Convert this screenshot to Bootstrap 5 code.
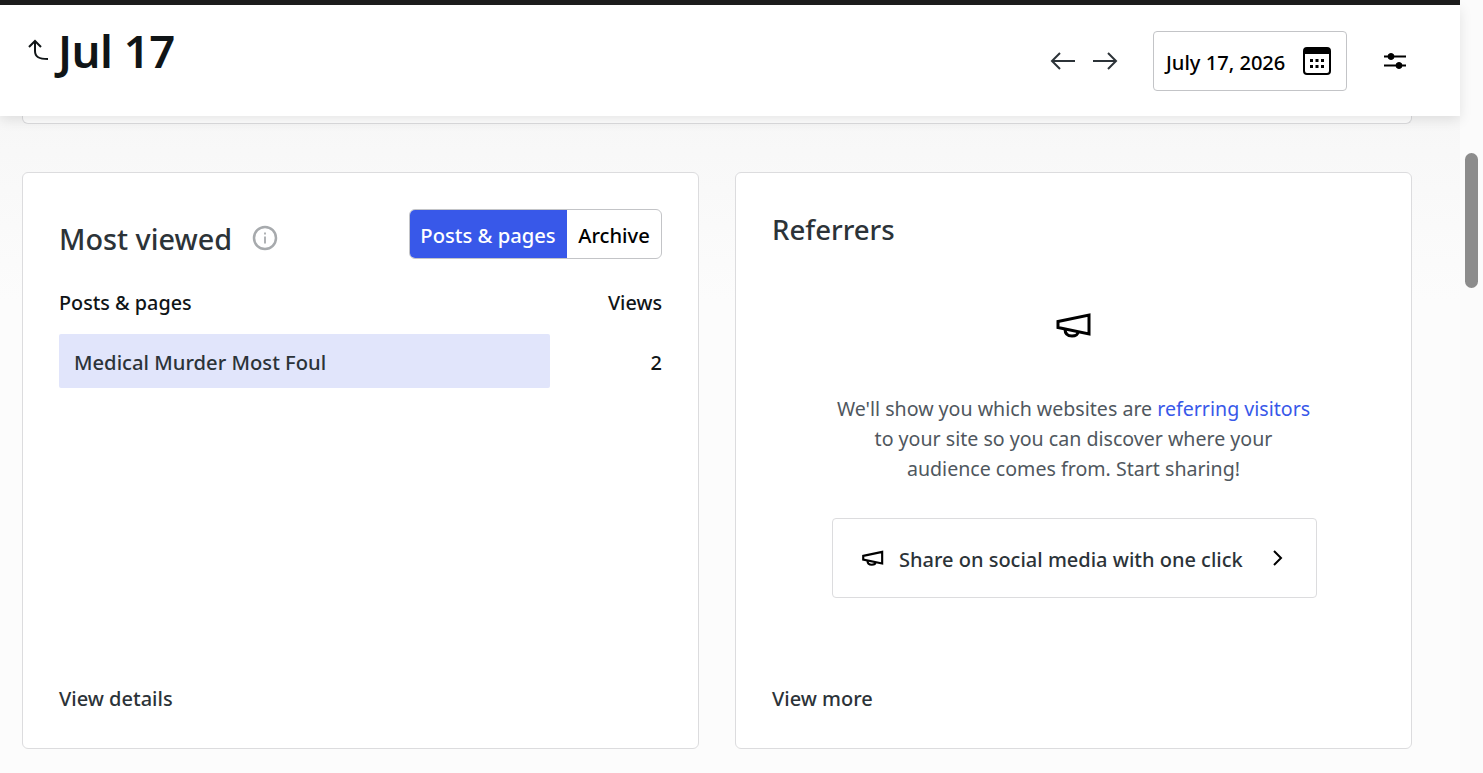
<!DOCTYPE html>
<html lang="en">

<head>
    <meta charset="UTF-8">
    <meta name="viewport" content="width=device-width, initial-scale=1.0">
    <title>Stats</title>
    <link href="https://cdn.jsdelivr.net/npm/bootstrap@5.3.0/dist/css/bootstrap.min.css" rel="stylesheet">
    <style>
        html, body { height: 100%; overflow: hidden; }
        body { font-family: "Noto Sans", "Open Sans", sans-serif; background: #fbfbfb; color: #2c3338; }
        a { text-decoration: none; }
        .top-line { height: 5px; background: #1d1d1d; }
        .page-col { width: 1460px; background: linear-gradient(#f7f7f7 116px, #fcfcfc 300px); }
        .bar-track { width: 23px; background: #fbfbfb; padding: 153px 5px 0 5px; }
        .bar-thumb { height: 135px; background: #8c8c8c; border-radius: 7px; }
        .stats-head { height: 111px; padding: 0 53px 0 26px; background: #fff; box-shadow: 0 4px 12px rgba(0, 0, 0, .1); position: relative; z-index: 2; }
        .stats-title { font-size: 45.5px; font-weight: 600; line-height: 1; color: #101517; margin: 23px 0 0 8px; letter-spacing: -.5px; }
        .back-ico { margin-top: 29px; }
        .head-tools { margin-top: 26px; height: 60px; }
        .date-box { width: 194px; height: 60px; border: 1px solid #c3c4c7; border-radius: 4px; padding: 0 15px 0 12px; margin: 0 36px 0 35px; color: #000; font-size: 20.1px; font-weight: 500; }
        .date-box span { padding-top: 4px; }
        .card-stub { height: 8px; margin: 0 48px 0 22px; background: #fff; border: 1px solid #dcdcde; border-top: 0; border-radius: 0 0 6px 6px; }
        .stats-wrap { margin: 48px 48px 0 22px; gap: 36px; }
        .stat-panel { width: 677px; height: 577px; padding: 36px; background: #fff; border: 1px solid #dcdcde; border-radius: 6px; }
        .panel-title { font-size: 27.6px; font-weight: 500; line-height: 40px; margin: 0; color: #2c3338; }
        .title-row { margin-top: 10px; }
        .title-row .panel-title { font-size: 28.8px; }
        .info-ico { margin: -2px 0 0 20px; }
        .seg-group { height: 50px; border: 1px solid #c3c4c7; border-radius: 6px; overflow: hidden; font-size: 20.2px; font-weight: 500; }
        .seg-on { width: 158px; background: #3858e9; color: #fff; margin: -1px 0 -1px -1px; padding-top: 3px; }
        .seg-off { width: 94px; color: #000; padding-top: 3px; }
        .col-labels { font-size: 19.8px; font-weight: 500; color: #101517; margin-top: 29px; line-height: 30px; }
        .post-row { margin-top: 16px; height: 54px; }
        .post-fill { width: 491px; height: 54px; background: #e1e5fb; border-radius: 2px; padding: 3px 0 0 15px; font-size: 20.2px; font-weight: 500; }
        .post-num { font-size: 20px; font-weight: 500; color: #101517; padding-top: 3px; }
        .panel-foot { font-size: 20px; font-weight: 500; line-height: 30px; color: #2c3338; margin-top: auto; margin-bottom: -2px; }
        .empty-ico { margin-top: 63px; }
        .empty-copy { font-size: 19.6px; line-height: 30px; color: #50575e; width: 500px; margin: 56px auto 34px; }
        .empty-copy a { color: #3858e9; }
        .share-btn { width: 485px; height: 80px; border: 1px solid #dcdcde; border-radius: 4px; padding: 0 33px 0 29px; font-size: 20px; font-weight: 500; color: #2c3338; margin-left: 60px; }
        .share-ico { margin-right: 15px; }
        .share-label { padding-top: 4px; }
    </style>
</head>

<body>
    <div class="d-flex h-100">
        <div class="page-col">
            <div class="top-line"></div>
            <header class="stats-head d-flex justify-content-between align-items-start">
                <div class="d-flex align-items-start">
                    <svg class="back-ico" width="24" height="32" viewBox="0 0 24 32" fill="none" stroke="#101517" stroke-width="2">
                        <path d="M3 13l6-6 6 6M9 7v10c0 6 4 8 13 8"/>
                    </svg>
                    <h1 class="stats-title">Jul 17</h1>
                </div>
                <div class="head-tools d-flex align-items-center">
                    <svg width="26" height="20" viewBox="0 0 26 20" fill="none" stroke="#2c3338" stroke-width="2" class="me-3">
                        <path d="M25 10H2M10 2l-8 8 8 8"/>
                    </svg>
                    <svg width="26" height="20" viewBox="0 0 26 20" fill="none" stroke="#2c3338" stroke-width="2">
                        <path d="M1 10h23M16 2l8 8-8 8"/>
                    </svg>
                    <div class="date-box d-flex align-items-center justify-content-between">
                        <span>July 17, 2026</span>
                        <svg width="28" height="28" viewBox="0 0 28 28">
                            <rect x="1" y="1" width="26" height="26" rx="3" fill="#fff" stroke="#000" stroke-width="2"/>
                            <rect x="1" y="1" width="26" height="6" fill="#000"/>
                            <g fill="#000">
                                <rect x="7" y="12" width="3" height="3"/><rect x="12.500" y="12" width="3" height="3"/><rect x="18" y="12" width="3" height="3"/>
                                <rect x="7" y="18" width="3" height="3"/><rect x="12.500" y="18" width="3" height="3"/><rect x="18" y="18" width="3" height="3"/>
                            </g>
                        </svg>
                    </div>
                    <svg width="24" height="24" viewBox="0 0 24 24" fill="#000" stroke="#000">
                        <path d="M1 7.500h22M1 16.500h22" stroke-width="2"/>
                        <circle cx="8" cy="7.500" r="3"/><circle cx="16" cy="16.500" r="3"/>
                    </svg>
                </div>
            </header>
            <div class="card-stub"></div>

            <main class="stats-wrap d-flex">
                <section class="stat-panel d-flex flex-column">
                    <div class="d-flex justify-content-between align-items-start">
                        <div class="title-row d-flex align-items-center">
                            <h2 class="panel-title">Most viewed</h2>
                            <svg class="info-ico" width="26" height="26" viewBox="0 0 26 26" fill="none" stroke="#a7aaad" stroke-width="2.500">
                                <circle cx="13" cy="13" r="11"/>
                                <path d="M13 11.500v7" stroke-width="1.800"/>
                                <path d="M13 7.500v2" stroke-width="1.800"/>
                            </svg>
                        </div>
                        <div class="seg-group d-flex">
                            <div class="seg-on d-flex align-items-center justify-content-center">Posts &amp; pages</div>
                            <div class="seg-off d-flex align-items-center justify-content-center">Archive</div>
                        </div>
                    </div>
                    <div class="col-labels d-flex justify-content-between">
                        <span>Posts &amp; pages</span>
                        <span>Views</span>
                    </div>
                    <div class="post-row d-flex justify-content-between align-items-center">
                        <div class="post-fill d-flex align-items-center">Medical Murder Most Foul</div>
                        <span class="post-num">2</span>
                    </div>
                    <a class="panel-foot" href="#">View details</a>
                </section>

                <section class="stat-panel d-flex flex-column">
                    <h2 class="panel-title">Referrers</h2>
                    <div class="empty-ico text-center">
                        <svg class="d-block mx-auto" width="36" height="26" viewBox="0 0 36 26" fill="none" stroke="#000" stroke-width="3">
                            <path d="M2 9.500L33 3v19L2 15.500z"/>
                            <path d="M9 17c0 5 3 7 7 7s6-2 6-4"/>
                        </svg>
                    </div>
                    <p class="empty-copy text-center">We'll show you which websites are <a href="#">referring visitors</a><br>to your site so you can discover where your<br>audience comes from. Start sharing!</p>
                    <a class="share-btn d-flex align-items-center" href="#">
                        <svg class="share-ico" width="22" height="16" viewBox="0 0 36 26" fill="none" stroke="#000" stroke-width="3.500">
                            <path d="M2 9.500L33 3v19L2 15.500z"/>
                            <path d="M9 17c0 5 3 7 7 7s6-2 6-4"/>
                        </svg>
                        <span class="share-label flex-grow-1">Share on social media with one click</span>
                        <svg width="12" height="18" viewBox="0 0 12 18" fill="none" stroke="#000" stroke-width="2">
                            <path d="M3 2l7 7-7 7"/>
                        </svg>
                    </a>
                    <a class="panel-foot" href="#">View more</a>
                </section>
            </main>
        </div>
        <div class="bar-track">
            <div class="bar-thumb"></div>
        </div>
    </div>

    <script src="https://cdn.jsdelivr.net/npm/bootstrap@5.3.0/dist/js/bootstrap.bundle.min.js"></script>
</body>

</html>
